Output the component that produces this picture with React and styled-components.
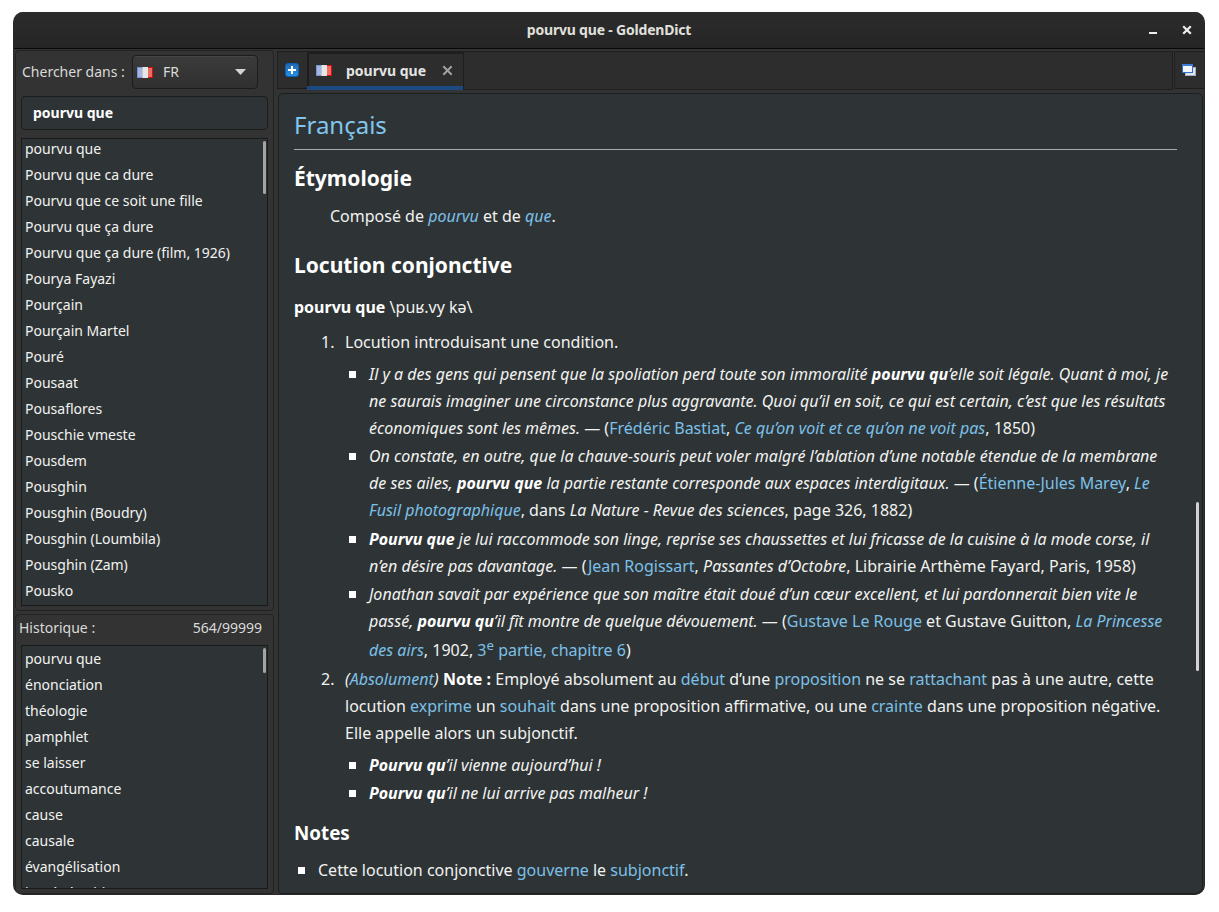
import React from "react";
import styled, { createGlobalStyle } from "styled-components";

const Global = createGlobalStyle`
  * { box-sizing: border-box; }
  html, body { margin: 0; padding: 0; background: #fff; }
  body { font-family: "Noto Sans", sans-serif; font-size: 14px; color: #f2f2f0; }
  b { color: #fff; }
`;

const Page = styled.div`
  width: 1219px;
  height: 912px;
  padding: 12px 14px 17px 13px;
  overflow: hidden;
`;

const Window = styled.main`
  height: 883px;
  display: flex;
  flex-direction: column;
  background: #333333;
  border: 1px solid #292929;
  border-top: 0;
  border-radius: 10px;
  overflow: hidden;
`;

const TitleBar = styled.header`
  display: grid;
  grid-template-columns: 100px 1fr 100px;
  align-items: center;
  height: 37px;
  flex: none;
  background: linear-gradient(#2c2c2c, #252525);
  border-bottom: 1px solid #080808;
`;

const Title = styled.h1`
  grid-column: 2;
  margin: 0;
  text-align: center;
  font: 700 14px/20px "Noto Sans", sans-serif;
  letter-spacing: -0.19px;
  color: #e0e0dd;
`;

const WindowButtons = styled.div`
  display: flex;
  justify-content: flex-end;
  padding-right: 12px;
  gap: 25px;
`;

const Body = styled.div`
  flex: 1;
  min-height: 0;
  display: grid;
  grid-template-columns: 259px 1fr;
  column-gap: 3px;
  padding-left: 1px;
`;

const Sidebar = styled.aside`
  display: flex;
  flex-direction: column;
  gap: 3px;
  padding: 1px 0 1px;
  min-height: 0;
`;

const Pane = styled.section`
  display: flex;
  flex-direction: column;
  border: 1px solid #222;
  border-radius: 4px;
  padding: ${(p) => p.$pad};
  height: ${(p) => p.$height}px;
  flex: none;
`;

const SearchRow = styled.div`
  display: flex;
  align-items: center;
  justify-content: space-between;
  height: 34px;
  padding: 0 10px 0 1px;
  white-space: nowrap;
  color: #dadad8;
`;

const SearchLabel = styled.span`
  padding-bottom: 2px;
`;

const Combo = styled.div`
  display: flex;
  align-items: center;
  width: 126px;
  height: 34px;
  padding: 0 11px 0 4px;
  border: 1px solid #1c1c1c;
  border-radius: 4px;
  background: linear-gradient(#3b3b3b, #303030);
  box-shadow: inset 0 1px #444;
  span { margin-left: 10px; padding-bottom: 2px; flex: 1; }
`;

const SearchInput = styled.div`
  margin-top: 7px;
  height: 34px;
  padding-left: 11px;
  border: 1px solid #1a1d1e;
  border-radius: 4px;
  background: #2e3436;
  font-weight: 700;
  line-height: 32px;
  color: #fff;
`;

const ListBox = styled.div`
  display: flex;
  justify-content: space-between;
  margin-top: ${(p) => p.$top}px;
  height: ${(p) => p.$height}px;
  border: 1px solid #181b1c;
  background: #2e3436;
  overflow: hidden;
`;

const List = styled.ul`
  margin: 0;
  padding: ${(p) => p.$inset || 0}px 0 0 3px;
  list-style: none;
`;

const ListItem = styled.li`
  height: 26px;
  line-height: 20px;
  white-space: nowrap;
`;

const Thumb = styled.div`
  width: 3px;
  height: ${(p) => p.$height}px;
  margin: ${(p) => p.$top}px ${(p) => p.$right}px 0 0;
  border-radius: 2px;
  background: ${(p) => p.$color || "#a4a4a1"};
`;

const HistoryHeader = styled.div`
  display: flex;
  justify-content: space-between;
  height: 22px;
  line-height: 22px;
  margin-left: -2px;
  padding-right: 6px;
  color: #dadad8;
`;

const Main = styled.section`
  display: flex;
  flex-direction: column;
  min-width: 0;
  padding-top: 2px;
`;

const TabRow = styled.nav`
  display: flex;
  height: 39px;
`;

const ToolCell = styled.div`
  display: flex;
  align-items: center;
  justify-content: center;
  width: ${(p) => p.$width}px;
  height: 38px;
  padding-right: 1px;
  border: 1px solid #1e1e1e;
  border-right: 0;
  background: #2d2d2d;
`;

const TabStrip = styled.div`
  flex: 1;
  display: flex;
  margin-right: 1px;
  border: 1px solid #1e1e1e;
  border-left: 0;
  background: #2d2d2d;
`;

const Tab = styled.div`
  display: flex;
  align-items: center;
  width: 157px;
  height: 38px;
  margin-bottom: -1px;
  padding: 0 10px 1px 9px;
  border-right: 1px solid #1e1e1e;
  box-shadow: inset 0 -4px #1b4a83, inset 2px 2px #1e1e1e;
  font-weight: 700;
  color: #e4e4e2;
  span { margin-left: 14px; flex: 1; }
`;

const ArticleFrame = styled.div`
  display: flex;
  justify-content: space-between;
  flex: none;
  width: 925px;
  height: 801px;
  margin: 3px 0 0 1px;
  border: 1px solid #1c1f20;
  border-radius: 5px 5px 8px 4px;
  background: #2e3436;
`;

const Article = styled.article`
  width: 898px;
  padding: 13px 0 0 15px;
  font-size: 16px;
  line-height: 27px;
`;

const Language = styled.h2`
  margin: 0;
  height: 43px;
  border-bottom: 1px solid #a5aaac;
  font-size: 24px;
  line-height: 36px;
  font-weight: 400;
  color: #82c5ee;
`;

const Heading = styled.h3`
  margin: ${(p) => p.$top}px 0 0;
  font-size: ${(p) => p.$size}px;
  line-height: 30px;
  font-weight: 700;
  color: #fff;
`;

const Para = styled.p`
  margin: ${(p) => p.$top}px 0 0 ${(p) => p.$indent || 0}px;
`;

const Senses = styled.ol`
  margin: 8px 0 0;
  padding: 0 0 0 27px;
  list-style: none;
  counter-reset: sense;
`;

const Sense = styled.li`
  display: grid;
  grid-template-columns: 24px 1fr;
  margin-bottom: 2px;
  counter-increment: sense;
  &::before { content: counter(sense) "."; }
`;

const Quotes = styled.ul`
  margin: ${(p) => p.$top}px 0 0;
  padding: 0;
  list-style: none;
`;

const Quote = styled.li`
  position: relative;
  padding-left: 24px;
  margin-bottom: ${(p) => p.$gap ?? 1}px;
  &::before {
    content: "";
    position: absolute;
    left: 4px;
    top: 10px;
    width: 7px;
    height: 7px;
    background: #fff;
  }
`;

const Link = styled.a`
  color: #7cc0e8;
`;

const Sup = styled.sup`
  font-size: 13.3px;
  line-height: 1;
  vertical-align: 6px;
`;

const Line = styled.span`
  display: block;
  white-space: nowrap;
`;

const RaisedLine = styled(Line)`
  line-height: 29px;
  height: 29px;
  padding-top: 1px;
`;

const Flag = () => (
  <svg width="16" height="11" viewBox="0 0 16 11">
    <rect width="5.3" height="11" fill="#7891d2" />
    <rect x="1" y="1" width="4.4" height="9" fill="#a4b5e2" />
    <rect x="5.3" width="5.7" height="11" fill="#e6e6e6" />
    <rect x="11" width="5" height="11" fill="#d80d0d" />
    <rect x="11" y="1" width="4" height="9" fill="#ef6b64" />
  </svg>
);

const PlusIcon = () => (
  <svg width="14" height="14" viewBox="0 0 14 14">
    <defs>
      <linearGradient id="plus" x1="0" y1="0" x2="0" y2="1">
        <stop offset="0" stopColor="#2267ad" />
        <stop offset="1" stopColor="#2591e5" />
      </linearGradient>
    </defs>
    <rect x=".5" y=".5" width="13" height="13" rx="2.5" fill="url(#plus)" stroke="#0b62b5" />
    <path d="M6 3h2v3h3v2H8v3H6V8H3V6h3z" fill="#fff" />
  </svg>
);

const WindowsIcon = () => (
  <svg width="14" height="12" viewBox="0 0 14 12">
    <rect x="3" y="3" width="11" height="9" fill="#a9afbe" />
    <rect x="4" y="4" width="9" height="7" fill="#dfe2ea" />
    <rect x=".5" y=".5" width="10" height="8" fill="#f2f4fb" stroke="#2d6fd0" />
    <rect width="11" height="2" fill="#3c7ad6" />
  </svg>
);

const Cross = ({ size, color, width }) => (
  <svg width={size} height={size} viewBox="0 0 10 10">
    <path d="M1.2 1.2l7.6 7.6M8.8 1.2L1.2 8.8" stroke={color} strokeWidth={width} />
  </svg>
);

const words = [
  "pourvu que", "Pourvu que ca dure", "Pourvu que ce soit une fille", "Pourvu que ça dure",
  "Pourvu que ça dure (film, 1926)", "Pourya Fayazi", "Pourçain", "Pourçain Martel", "Pouré",
  "Pousaat", "Pousaflores", "Pouschie vmeste", "Pousdem", "Pousghin", "Pousghin (Boudry)",
  "Pousghin (Loumbila)", "Pousghin (Zam)", "Pousko",
];

const history = [
  "pourvu que", "énonciation", "théologie", "pamphlet", "se laisser", "accoutumance",
  "cause", "causale", "évangélisation", "impénétrable",
];

const WordList = ({ items, inset }) => (
  <List $inset={inset}>{items.map((w) => <ListItem key={w}>{w}</ListItem>)}</List>
);

export default function App() {
  return (
    <Page>
      <Global />
      <Window>
        <TitleBar>
          <Title>pourvu que - GoldenDict</Title>
          <WindowButtons>
            <svg width="8" height="10" viewBox="0 0 8 10"><path d="M0 7h8v2H0z" fill="#eeeeec" /></svg>
            <Cross size={10} color="#eeeeec" width={2.2} />
          </WindowButtons>
        </TitleBar>
        <Body>
          <Sidebar>
            <Pane $height={561} $pad="4px 5px 0 5px">
              <SearchRow>
                <SearchLabel>Chercher dans :</SearchLabel>
                <Combo>
                  <Flag />
                  <span>FR</span>
                  <svg width="11" height="6" viewBox="0 0 11 6"><path d="M0 0h11L5.5 6z" fill="#d3d3d0" /></svg>
                </Combo>
              </SearchRow>
              <SearchInput>pourvu que</SearchInput>
              <ListBox $top={8} $height={468}>
                <WordList items={words} />
                <Thumb $height={53} $top={2} $right={1} />
              </ListBox>
            </Pane>
            <Pane $height={280} $pad="2px 5px 0 5px">
              <HistoryHeader>
                <span>Historique :</span>
                <span>564/99999</span>
              </HistoryHeader>
              <ListBox $top={6} $height={244}>
                <WordList items={history} inset={3} />
                <Thumb $height={25} $top={2} $right={1} />
              </ListBox>
            </Pane>
          </Sidebar>
          <Main>
            <TabRow>
              <ToolCell $width={30}><PlusIcon /></ToolCell>
              <TabStrip>
                <Tab>
                  <Flag />
                  <span>pourvu que</span>
                  <Cross size={11} color="#a2a2a0" width={1.8} />
                </Tab>
              </TabStrip>
              <ToolCell $width={30}><WindowsIcon /></ToolCell>
            </TabRow>
            <ArticleFrame>
              <Article>
                <Language>Français</Language>
                <Heading $top={13} $size={21}>Étymologie</Heading>
                <Para $top={10} $indent={36}>
                  Composé de <Link as="em">pourvu</Link> et de <Link as="em">que</Link>.
                </Para>
                <Heading $top={20} $size={21}>Locution conjonctive</Heading>
                <Para $top={14}><b>pourvu que</b> \puʁ.vy kə\</Para>
                <Senses>
                  <Sense>
                    <div>
                      Locution introduisant une condition.
                      <Quotes $top={5}>
                        <Quote>
                          <Line><em>Il y a des gens qui pensent que la spoliation perd toute son immoralité <b>pourvu qu</b>’elle soit légale. Quant à moi, je</em></Line>
                          <Line><em>ne saurais imaginer une circonstance plus aggravante. Quoi qu’il en soit, ce qui est certain, c’est que les résultats</em></Line>
                          <Line><em>économiques sont les mêmes.</em> — (<Link>Frédéric Bastiat</Link>, <Link as="em">Ce qu’on voit et ce qu’on ne voit pas</Link>, 1850)</Line>
                        </Quote>
                        <Quote $gap={2}>
                          <Line><em>On constate, en outre, que la chauve-souris peut voler malgré l’ablation d’une notable étendue de la membrane</em></Line>
                          <Line><em>de ses ailes, <b>pourvu que</b> la partie restante corresponde aux espaces interdigitaux.</em> — (<Link>Étienne-Jules Marey</Link>, <Link as="em">Le</Link></Line>
                          <Line><Link as="em">Fusil photographique</Link>, dans <em>La Nature - Revue des sciences</em>, page 326, 1882)</Line>
                        </Quote>
                        <Quote>
                          <Line><em><b>Pourvu que</b> je lui raccommode son linge, reprise ses chaussettes et lui fricasse de la cuisine à la mode corse, il</em></Line>
                          <Line><em>n’en désire pas davantage.</em> — (<Link>Jean Rogissart</Link>, <em>Passantes d’Octobre</em>, Librairie Arthème Fayard, Paris, 1958)</Line>
                        </Quote>
                        <Quote $gap={0}>
                          <Line><em>Jonathan savait par expérience que son maître était doué d’un cœur excellent, et lui pardonnerait bien vite le</em></Line>
                          <Line><em>passé, <b>pourvu qu</b>’il fît montre de quelque dévouement.</em> — (<Link>Gustave Le Rouge</Link> et Gustave Guitton, <Link as="em">La Princesse</Link></Line>
                          <RaisedLine><Link as="em">des airs</Link>, 1902, <Link>3<Sup>e</Sup> partie, chapitre 6</Link>)</RaisedLine>
                        </Quote>
                      </Quotes>
                    </div>
                  </Sense>
                  <Sense>
                    <div>
                      <Line><em>(<Link>Absolument</Link>)</em> <b>Note :</b> Employé absolument au <Link>début</Link> d’une <Link>proposition</Link> ne se <Link>rattachant</Link> pas à une autre, cette</Line>
                      <Line>locution <Link>exprime</Link> un <Link>souhait</Link> dans une proposition affirmative, ou une <Link>crainte</Link> dans une proposition négative.</Line>
                      <Line>Elle appelle alors un subjonctif.</Line>
                      <Quotes $top={5}>
                        <Quote><em><b>Pourvu qu</b>’il vienne aujourd’hui !</em></Quote>
                        <Quote><em><b>Pourvu qu</b>’il ne lui arrive pas malheur !</em></Quote>
                      </Quotes>
                    </div>
                  </Sense>
                </Senses>
                <Heading $top={10} $size={18.8}>Notes</Heading>
                <Quotes $top={9}>
                  <Quote>Cette locution conjonctive <Link>gouverne</Link> le <Link>subjonctif</Link>.</Quote>
                </Quotes>
              </Article>
              <Thumb $height={169} $top={408} $right={3} $color="#d3d3d3" />
            </ArticleFrame>
          </Main>
        </Body>
      </Window>
    </Page>
  );
}
